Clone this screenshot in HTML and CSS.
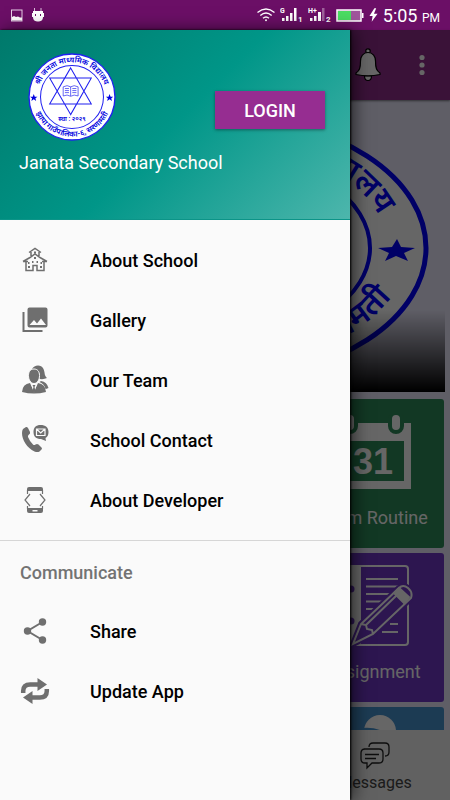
FILE: index.html
```html
<!DOCTYPE html>
<html lang="en">
<head>
<meta charset="utf-8">
<meta name="viewport" content="width=device-width, initial-scale=1">
<title>Janata Secondary School</title>
<link rel="stylesheet" href="styles.css">
</head>
<body>
<div class="status">
  <div class="status-left">
    <svg width="12" height="13" viewBox="0 0 12 13"><rect x="0.5" y="1" width="10.5" height="11" fill="none" stroke="#e6cfe5"/><path d="M1 8l2-1 2 1 2-.5 2 1h2v3H1z" fill="#fff"/></svg>
    <svg width="12" height="14" viewBox="0 0 12 14"><path d="M2.500 0v3M9 0v3" stroke="#d9bcd8"/><path d="M1 3h10v6q0 4-4 4.500H5Q1 13 1 9z" fill="#fff"/><path d="M0 5h12v4H0z" fill="#fff"/><path d="M3 6h1v2H3zM8 6h1v2H8z" fill="#6d1068"/></svg>
  </div>
  <div class="status-right">
    <svg width="18" height="14" viewBox="0 0 18 14" fill="none" stroke="#fff" stroke-width="1.400"><path d="M.5 4.500Q9-2.500 17.500 4.500M3.300 7.500Q9 2.500 14.700 7.500M6 10.300Q9 7.500 12 10.300"/><circle cx="9" cy="12.300" r="1" fill="#fff" stroke="none"/></svg>
    <svg class="signal" width="23" height="16" viewBox="0 0 23 16" fill="#fff"><text x="0" y="6">G</text><path d="M2 11h2.500v3H2zM6 9h2.500v5H6zM10 6h2.500v8H10zM14 1h2.500v13H14z"/><text x="18" y="15" class="sim">1</text></svg>
    <svg class="signal" width="23" height="16" viewBox="0 0 23 16" fill="#fff"><text x="0" y="6">H+</text><path d="M2 11h2.500v3H2zM6 9h2.500v5H6zM10 5h3v9h-3z"/><path d="M14 1h2.500v13H14z" opacity=".35"/><text x="18" y="15" class="sim">2</text></svg>
    <svg width="28" height="13" viewBox="0 0 28 13"><rect x="1" y="1" width="24" height="11" fill="#a0559c" stroke="#fff" stroke-width="1.500"/><path d="M2 2h13v9H2z" fill="#4bdc62"/><path d="M26 4h1.500v5H26z" fill="#fff"/></svg>
    <svg width="9" height="14" viewBox="0 0 10 15"><path d="M6 0L.5 8.500H4L3 15 9.500 6H5.500L8 0z" fill="#fff"/></svg>
    <span class="clock">5:05 <small>PM</small></span>
  </div>
</div>

<div class="screen">
  <div class="app">
    <header class="appbar">
      <button class="icon-btn" aria-label="Notifications"><svg width="26" height="34" viewBox="0 0 26 34"><g fill="#fff" stroke="#000" stroke-width="1.200"><circle cx="13" cy="3" r="2.200"/><path d="M9.500 28q0 4.500 3.500 4.500t3.500-4.500z"/><path d="M13 4.500c-5 0-7.500 4-7.500 8.500 0 7-1 9.500-4.500 12v1.500q12 2.500 24 0V25c-3.500-2.500-4.500-5-4.500-12 0-4.500-2.500-8.500-7.500-8.500z"/></g></svg></button>
      <button class="icon-btn" aria-label="More options"><svg width="6" height="22" viewBox="0 0 6 22" fill="#fff"><circle cx="3" cy="3.500" r="2.600"/><circle cx="3" cy="11" r="2.600"/><circle cx="3" cy="18.500" r="2.600"/></svg></button>
    </header>
    <main class="content">
      <div class="slide">
        <svg class="slide-logo" viewBox="0 0 440 292">
          <defs>
            <path id="bigTop" d="M58 148A162 103 0 0 1 382 148"/>
            <path id="bigBottom" d="M37 148A183 117 0 0 0 403 148"/>
          </defs>
          <ellipse cx="220" cy="148" rx="201" ry="130" fill="#fff" stroke="#0000ff" stroke-width="5"/>
          <ellipse cx="220" cy="148" rx="145" ry="93" fill="none" stroke="#0000ff" stroke-width="4"/>
          <path d="M392 139l4 8 14 1-11 5 4 8-12-5-11 5 4-8-11-5 14-1z" fill="#0000ff"/>
          <g class="seal-big" fill="#0000ff">
            <text text-anchor="end"><textPath href="#bigTop" startOffset="92%">विद्यालय</textPath></text>
            <text text-anchor="end"><textPath href="#bigBottom" startOffset="89%">सरणामती</textPath></text>
          </g>
        </svg>
        <div class="slide-fade"></div>
      </div>
      <div class="cards">
        <a class="card green" href="#">
          <svg width="76" height="76" viewBox="0 0 76 76"><path d="M0 9h76v66H0z" fill="#fff"/><path d="M7 27h62v40H7z" fill="#2f8c5a"/><g fill="#fff" stroke="#2f8c5a" stroke-width="4"><rect x="9" y="-1" width="12" height="19" rx="6"/><rect x="55" y="-1" width="12" height="19" rx="6"/></g><text class="date" x="38" y="60" text-anchor="middle" fill="#fff">31</text></svg>
          <span>Exam Routine</span>
        </a>
        <a class="card purple" href="#">
          <svg width="82" height="84" viewBox="0 0 82 84" fill="none" stroke="#fff" stroke-width="2"><rect x="4" y="2" width="72" height="79" rx="3"/><path d="M5 3h23v77H5z" fill="#fff"/><circle cx="19" cy="25" r="3.500" fill="#7037c8" stroke="none"/><circle cx="19" cy="57" r="3.500" fill="#7037c8" stroke="none"/><path d="M34 15h32M34 22.500h32M34 30h30M34 37.500h23M34 45h17M34 53h8M50 68h16M58 60h8"/><path d="M21 80l8-20 38-36q4-4 9 0t3 10L41 70z" fill="#7037c8" stroke="#7037c8" stroke-width="6"/><path d="M21 80l8-20 38-36q4-4 9 0t3 10L41 70zM29 60l5 1 1 4 5 1 1 4M34 61l32-31" fill="#7037c8"/><path d="M62 29l5-5 10 9-5 6z" fill="#fff"/></svg>
          <span>Assignment</span>
        </a>
        <a class="card blue" href="#" aria-label="More">
          <svg width="82" height="84" viewBox="0 0 82 84"><circle cx="48" cy="19" r="16" fill="#fff"/><path d="M25 19q17-4 30 5" fill="none" stroke="#4893cf" stroke-width="4"/></svg>
        </a>
      </div>
    </main>
    <nav class="tabs">
      <a class="tab" href="#">
        <svg width="30" height="28" viewBox="0 0 30 28" fill="none" stroke="#222" stroke-width="1.300"><path d="M4 7h15q4 0 4 4v6q0 4-4 4h-7l-5 5v-5H5q-4 0-4-4v-6q0-4 4-4z"/><path d="M5 12.500h14M5 16.500h11M9 5q0-4 4-4h12q4 0 4 4v5q0 4-4 4"/></svg>
        <span>Messages</span>
      </a>
    </nav>
    <div class="scrim"></div>
  </div>

  <aside class="drawer">
    <div class="drawer-head">
      <div class="head-row">
        <svg class="logo" viewBox="26 26 260 260" role="img" aria-label="School seal">
          <defs>
            <path id="top" d="M54 156a102 102 0 0 1 204 0"/>
            <path id="bottom" d="M39 156a117 117 0 0 0 234 0"/>
          </defs>
          <g fill="none" stroke="#2020f0" stroke-width="4">
            <circle cx="156" cy="156" r="127" fill="#fff"/>
            <circle cx="156" cy="156" r="93" stroke-width="3"/>
            <path d="M152 70l61 107H90zM152 208L90 100h123z" stroke-width="3"/>
            <path d="M152 126q-10-7-22 0v27q12-6 22 1 10-7 22-1v-27q-12-7-22 0zv27M135 131h12M135 137h12M135 143h12M157 131h12M157 137h12M157 143h12" stroke-width="2"/>
          </g>
          <g fill="#0000e0">
            <path d="M43 147l3 8h8l-6 5 2 8-7-5-7 5 2-8-6-5h8zM267 147l3 8h8l-6 5 2 8-7-5-7 5 2-8-6-5h8z"/>
            <g class="seal">
              <text text-anchor="middle"><textPath href="#top" startOffset="50%">श्री जनता माध्यमिक विद्यालय</textPath></text>
              <text text-anchor="middle"><textPath href="#bottom" startOffset="50%">झापा गाउँपालिका-६, सरणामती</textPath></text>
              <text class="year" x="156" y="228" text-anchor="middle">स्था : २०२९</text>
            </g>
          </g>
        </svg>
        <button class="login">LOGIN</button>
      </div>
      <h1>Janata Secondary School</h1>
    </div>
    <nav class="menu">
      <a href="#"><svg viewBox="0 0 30 30" fill="none" stroke="#6f6f6f" stroke-width="1.500"><path d="M6 16v9.500h7v-5h4v5h7V16M3 16.500l7-4 5-3.500 5 3.500 7 4M3 16.500h5M22 16.500h5M11 11V7M19 11V7M9 7.500l6-4 6 4"/><path d="M8 18h1.500M12 17h1.500M16.500 17H18M20.500 18H22M8 22h2M20 22h2M14 7.500h2M14 13h2" stroke-width="2"/></svg>About School</a>
      <a href="#"><svg viewBox="0 0 30 30" fill="#6f6f6f"><path d="M9.500 2.500h16q2 0 2 2v16q0 2-2 2h-16q-2 0-2-2v-16q0-2 2-2zm0 17.500h16.500l-5-6.500-4 5-3-3.500z" fill-rule="evenodd"/><path d="M2.500 7v20h20v-2H4.500V7z"/></svg>Gallery</a>
      <a href="#"><svg viewBox="0 0 30 30" fill="#6f6f6f"><path d="M12 4q2-3.500 6-3.500c5 0 6 4 6.500 7 .3 3 1 4 2.500 5.500q-3 1.500-7 1zM21 16q6 1 7.500 7-2 1-3 1-1-5-6-7z"/><path d="M14 4c3.500 0 5.500 2.500 5.500 6.500s-2 8-5.500 8-5.500-4-5.500-8S10.500 4 14 4z" stroke="#fafafa"/><path d="M10 18q-7.500 1-8 9 12 3 24 0-.5-8-8-9l-4 8z"/><path d="M10.500 18.500l3.500 9 3.500-9z" fill="#fafafa"/><path d="M12.500 20h3l-1 2 1 4-1.500 2-1.500-2 1-4z"/></svg>Our Team</a>
      <a href="#"><svg viewBox="0 0 30 30" fill="#6f6f6f"><path d="M3 4l3-2q1-.5 2 1l2 4q.5 1.500-1 2.500-1.500 1-1 2.500 2 5 5 7.500 1 1 2.500 0t3 0l3 3q1 1 0 2l-2 2q-2 1-5 0C7 23 2 15 2 8q0-2.500 1-4z"/><path d="M20.500 0c5 0 8 2.500 8 7 0 3-1 5-3 6l.5 3-5-2c-5 0-7.500-2.500-7.500-7s2.500-7 7-7z"/><path d="M16.500 4h8.500v6.500h-8.500zM16.500 4l4.200 4L25 4" fill="none" stroke="#fafafa" stroke-width="1.200"/></svg>School Contact</a>
      <a href="#"><svg viewBox="0 0 30 30" fill="#6f6f6f"><path d="M9 2h12q2 0 2 2v2H7V4q0-2 2-2zM7 23h16v3q0 2-2 2H9q-2 0-2-2zm5.500 2v1.500h5V25z" fill-rule="evenodd"/><path d="M7.500 5v4M22.500 5v4M7.500 21v3M22.500 21v3M10 9l-5 6 5 6M20 9l5 6-5 6" fill="none" stroke="#6f6f6f" stroke-width="1.200"/></svg>About Developer</a>
    </nav>
    <nav class="menu second">
      <h2>Communicate</h2>
      <a href="#"><svg viewBox="0 0 30 30" fill="#6f6f6f"><path d="M22.500 6L7.500 15l15 9" fill="none" stroke="#6f6f6f" stroke-width="2"/><circle cx="22.500" cy="6" r="3.700"/><circle cx="7.500" cy="15" r="3.700"/><circle cx="22.500" cy="24" r="3.700"/></svg>Share</a>
      <a href="#"><svg viewBox="0 0 30 30"><path d="M3.200 17v-2q0-6.500 7-6.500h9M26.800 13v2q0 6.500-7 6.500h-9" fill="none" stroke="#6f6f6f" stroke-width="4.500"/><path d="M17.500 2L27 8.500 17.500 15zM12.500 15L3 21.500l9.500 6.500z" fill="#6f6f6f"/></svg>Update App</a>
    </nav>
  </aside>
</div>
</body>
</html>
```

FILE: styles.css
```css
* { box-sizing: border-box; }

body {
  margin: 0;
  height: 100vh;
  display: flex;
  flex-direction: column;
  overflow: hidden;
  font-family: Roboto, "Noto Sans", sans-serif;
}

a { color: inherit; text-decoration: none; }
button { font: inherit; border: 0; padding: 0; background: none; }
svg { flex: none; }

.status {
  display: flex;
  justify-content: space-between;
  align-items: center;
  height: 30px;
  padding: 0 10px 0 11px;
  background: #6b0f66;
  color: #fff;
}
.status-left { display: flex; gap: 9px; align-items: center; }
.status-right { display: flex; gap: 5px; align-items: center; }
.signal text { font-size: 7px; font-weight: 700; }
.signal .sim { font-size: 8px; }
.clock { font-size: 18px; line-height: 24px; padding-top: 3px; }
.clock small { font-size: 12px; }

.screen { position: relative; flex: 1; min-height: 0; }

.app { position: relative; height: 100%; display: flex; flex-direction: column; background: #edebff; }
.scrim { position: absolute; inset: 0; background: rgba(0, 0, 0, 0.6); }

.appbar {
  display: flex;
  justify-content: flex-end;
  align-items: center;
  gap: 38px;
  height: 70px;
  padding-right: 25px;
  background: #912d8c;
  flex: none;
  box-shadow: 0 1px 2px rgba(0, 0, 0, 0.5);
}
.icon-btn { display: flex; }

.content { flex: 1; min-height: 0; overflow: hidden; }
.slide { position: relative; margin: 0 5px; }
.slide-logo { display: block; width: 100%; }
.slide-fade {
  position: absolute;
  inset: auto 0 0;
  height: 82px;
  background: linear-gradient(transparent, #000);
}
.seal-big { font-size: 32px; font-weight: 600; }

.cards {
  display: grid;
  grid-template-columns: repeat(3, 1fr);
  gap: 5px;
  padding: 7px 6px;
}
.card {
  grid-column: 3;
  display: flex;
  flex-direction: column;
  align-items: center;
  justify-content: space-between;
  height: 149px;
  padding: 15px 0 19px;
  border-radius: 3px;
  color: #fff;
  font-size: 18px;
  line-height: 22px;
  white-space: nowrap;
}
.green { background: #2f8c5a; }
.purple { background: #7037c8; padding: 11px 0 19px; }
.blue { background: #4893cf; padding-top: 5px; }
.date { font: 700 36px "Liberation Sans", sans-serif; }

.tabs {
  display: grid;
  grid-template-columns: repeat(3, 1fr);
  height: 70px;
  flex: none;
  background: #f2f2f2;
}
.tab {
  grid-column: 3;
  display: flex;
  flex-direction: column;
  align-items: center;
  gap: 2px;
  padding-top: 12px;
  color: #444;
  font-size: 16px;
  line-height: 22px;
}

.drawer {
  position: absolute;
  inset: 0 auto 0 0;
  width: 350px;
  max-width: 85%;
  background: #fafafa;
  box-shadow: 1px 0 2px #000, 4px 0 16px rgba(0, 0, 0, 0.6);
}
.drawer-head {
  height: 190px;
  padding: 23px 25px 0 19px;
  background: linear-gradient(135deg, #00796b, #009688 50%, #4db6ac);
  border-bottom: 1px solid #0c9488;
  color: #fff;
}
.head-row { display: flex; justify-content: space-between; align-items: center; padding-left: 9px; }
.logo { width: 88px; height: 88px; }
.seal { font-size: 23px; font-weight: 600; }
.seal .year { font-size: 19px; }
.login {
  width: 110px;
  height: 38px;
  margin-top: 26px;
  background: #962d91;
  color: #fff;
  font-size: 18px;
  font-weight: 500;
  box-shadow: 0 1px 3px rgba(0, 0, 0, 0.4);
}
h1 { margin: 10px 0 0; font-size: 18px; line-height: 24px; font-weight: 400; }

.menu { padding: 10px 0; }
.menu a {
  display: flex;
  align-items: center;
  gap: 40px;
  height: 60px;
  padding-left: 20px;
  color: #000;
  font-size: 18px;
  font-weight: 500;
}
.menu svg { width: 30px; height: 30px; }
.second { border-top: 1px solid #d6d6d6; padding: 0; }
h2 { margin: 0; padding: 20px 20px 16px; font-size: 18px; line-height: 24px; font-weight: 500; color: #737373; }
```
